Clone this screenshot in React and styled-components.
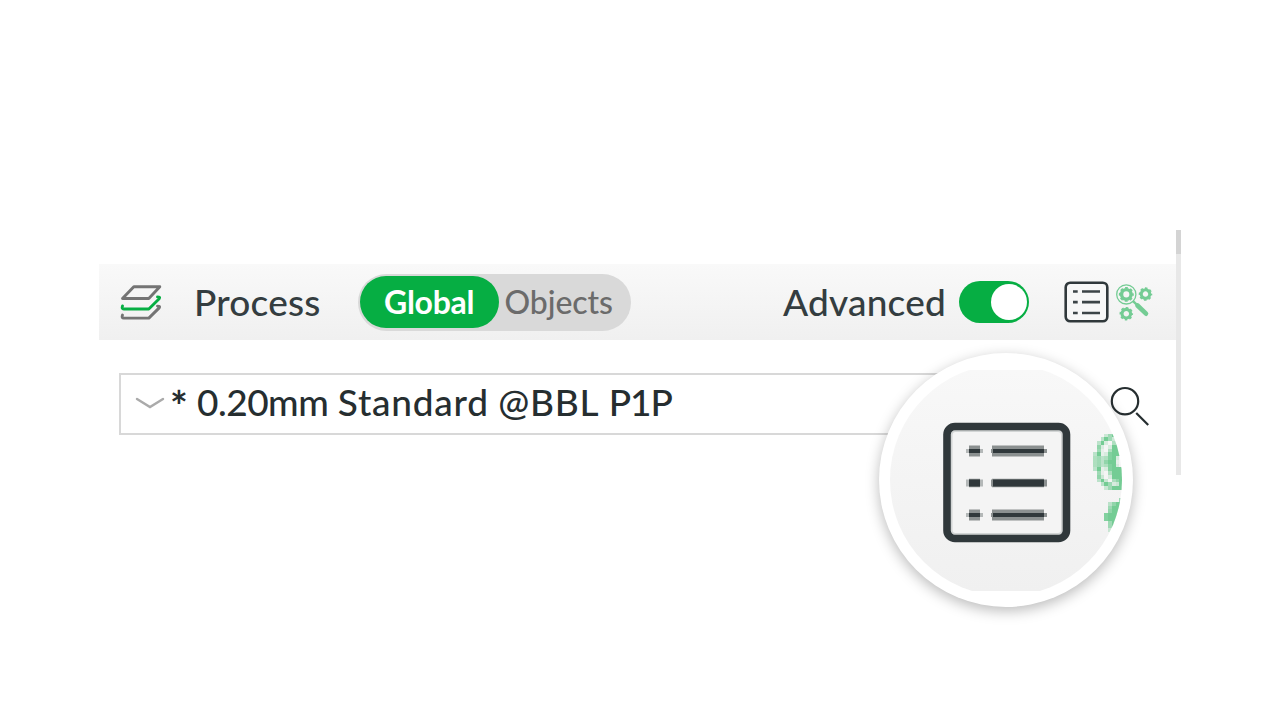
import React from 'react';
import styled, { createGlobalStyle } from 'styled-components';

const GlobalStyle = createGlobalStyle`
  * { box-sizing: border-box; }
  body { margin: 0; background: #fff; overflow: hidden; font-family: Lato, "Noto Sans", sans-serif; }
  svg { display: block; flex: none; }
`;

const Page = styled.main`
  position: relative;
  display: flex;
  width: 1280px;
  height: 720px;
  padding: 230px 0 0 99px;
  background: #fff;
`;

const Panel = styled.section`
  display: flex;
  flex-direction: column;
  width: 1076.5px;
  height: 244px;
  padding-top: 34px;
`;

const Toolbar = styled.header`
  display: flex;
  align-items: center;
  height: 75.5px;
  padding: 1px 22.5px 0 20px;
  background: linear-gradient(#f9f9f9, #f0f0f0);
`;

const Label = styled.span`
  padding-bottom: 1px;
  font-size: 37px;
  font-weight: 500;
  line-height: 44px;
  white-space: pre;
  letter-spacing: 0.22px;
  color: #343d40;
`;

const Title = styled(Label)`
  margin-left: 31px;
`;

const Segmented = styled.div`
  display: flex;
  align-items: center;
  width: 273px;
  height: 57px;
  margin-left: 37px;
  padding: 0 0 0 2px;
  border-radius: 29px;
  background: #d9d9d9;
`;

const Segment = styled.button`
  width: ${p => p.$width}px;
  height: 52px;
  padding: 0;
  border: 0;
  border-radius: 26px;
  background: ${p => (p.$active ? '#06ae43' : 'transparent')};
  color: ${p => (p.$active ? '#fff' : '#6b6b6b')};
  font: ${p => (p.$active ? 700 : 500)} 32px/50px Lato, sans-serif;
  letter-spacing: ${p => (p.$active ? -0.3 : -0.1)}px;
`;

const Spacer = styled.div`
  flex: 1;
`;

const Switch = styled.div`
  display: flex;
  align-items: center;
  justify-content: flex-end;
  width: 70.5px;
  height: 42px;
  margin: 0 34.5px 0 12.5px;
  padding-right: 2.5px;
  border-radius: 21px;
  background: #06ae43;
`;

const Knob = styled.div`
  width: 36px;
  height: 36px;
  border-radius: 50%;
  background: #fff;
`;

const Actions = styled.div`
  display: flex;
  align-items: center;
  gap: 6.5px;
`;

const PresetRow = styled.div`
  display: flex;
  align-items: center;
  justify-content: space-between;
  margin-top: 33.5px;
  padding: 0 26.5px 0 19.5px;
`;

const Preset = styled.div`
  display: flex;
  align-items: center;
  width: 850px;
  height: 62px;
  padding-left: 14.5px;
  border: 2px solid #d8d8d8;
  background: #fff;
`;

const Modified = styled.span`
  width: 19px;
  margin-left: 5px;
  padding-top: 3px;
  font-size: 42px;
  font-weight: 700;
  line-height: 44px;
  color: #262e30;
`;

const PresetName = styled(Label)`
  margin-left: 8px;
  padding-bottom: 4px;
  color: #262e30;
`;

const Word = styled.span`
  letter-spacing: ${p => p.$track}px;
`;

const Scrollbar = styled.div`
  width: 5.5px;
  height: 244.5px;
  background: #e8e8e8;
`;

const Thumb = styled.div`
  height: 23.5px;
  background: #d4d4d4;
`;

const Lens = styled.div`
  position: absolute;
  left: 879px;
  top: 353px;
  width: 254px;
  height: 254px;
  padding: 11px;
  border-radius: 50%;
  background: #fff;
  box-shadow: 0 4px 14px rgba(0, 0, 0, 0.27);
`;

function LayersIcon() {
  return (
    <svg width="44" height="38" viewBox="0 0 44 38" fill="none" strokeWidth="2.9" strokeLinejoin="round" strokeLinecap="round">
      <path d="M14.8 3.7H40.8L29.8 15.5H3.5Z" stroke="#747474" />
      <path d="M3.5 22.9Q2.4 26 4.8 26H29.8L40.2 15.7Q41.6 13.9 38.5 13.9" stroke="#06ae43" />
      <path d="M3.5 32.1Q2.4 35.1 4.8 35.1H29.8L40.2 24.9Q41.6 23.1 38.5 23.1" stroke="#747474" />
    </svg>
  );
}

function ListIcon() {
  return (
    <svg width="45" height="42" viewBox="0 0 45 42" fill="none">
      <rect x="1.7" y="1.7" width="41.6" height="38.6" rx="4.5" fill="#f7f7f7" stroke="#30383b" strokeWidth="2.6" />
      {[10.5, 21.2, 32].map(y => (
        <path key={y} d={`M9 ${y}H13.7M18 ${y}H36`} stroke="#3c4447" strokeWidth="2.7" />
      ))}
    </svg>
  );
}

function Gear({ x, y, r }) {
  return (
    <g transform={`translate(${x} ${y})`} stroke="#74cc94">
      <circle r={r * 0.64} strokeWidth={r * 0.46} />
      <circle r={r * 0.89} strokeWidth={r * 0.24} strokeDasharray={`${r * 0.38} ${r * 0.319}`} strokeDashoffset={r * 0.19} />
    </g>
  );
}

function TuneIcon() {
  return (
    <svg width="38" height="38" viewBox="0 0 38 38" fill="none">
      <circle cx="11.3" cy="11.4" r="9.6" stroke="#74cc94" strokeWidth="1.3" />
      <Gear x={11.3} y={11.4} r={7.4} />
      <Gear x={30.5} y={11.1} r={6.7} />
      <Gear x={11.3} y={30.7} r={6.7} />
      <path d="M18 18.2 22 21.9" stroke="#74cc94" strokeWidth="2.4" />
      <path d="M22.5 22.5 31 30.7" stroke="#74cc94" strokeWidth="4.6" strokeLinecap="round" />
    </svg>
  );
}

// Opacity of each enlarged pixel, from 0 (clear) to 9 (solid).
const largeGear = [
  '00036999',
  '00496311',
  '04920577',
  '07202999',
  '06105999',
  '49128999',
  '56458920',
  '56479910',
  '56458920',
  '49128999',
  '06105999',
  '07302999',
  '04930579',
  '00496239',
  '00036999',
];
const smallGear = ['00000006', '00004799', '00006999', '00007999', '00089999', '00089999', '00006999', '00006999', '00003799'];

function Pixels({ x, y, rows }) {
  const size = 3.75;
  return rows.flatMap((row, j) =>
    [...row].map((v, i) =>
      v === '0' ? null : (
        <rect
          key={`${i}-${j}`}
          x={x + i * size}
          y={y + j * size}
          width={size}
          height={size}
          fill="#74cc94"
          fillOpacity={v / 9}
          shapeRendering="crispEdges"
        />
      )
    )
  );
}

function Magnified() {
  return (
    <svg width="232" height="232" viewBox="890 364 232 232">
      <defs>
        <clipPath id="lens"><circle cx="1006" cy="480" r="116" /></clipPath>
        <linearGradient id="bar" x1="0" y1="0" x2="0" y2="1">
          <stop offset="0" stopColor="#f8f8f8" /><stop offset="1" stopColor="#f0f0f0" />
        </linearGradient>
      </defs>
      <g clipPath="url(#lens)">
        <rect x="890" y="370" width="232" height="221" fill="url(#bar)" />
        <rect x="951.5" y="431" width="110.5" height="103" rx="4" fill="#f4f4f4" stroke="#d2d5d5" strokeWidth="2" />
        <rect x="947" y="426.5" width="119.5" height="112" rx="8" fill="none" stroke="#30383b" strokeWidth="7.6" />
        {[451, 483, 515].map(y => {
          const core = y === 483 ? 7 : 4;
          const edge = y === 483 ? 8.5 : 11;
          return (
            <g key={y}>
              <rect x="966" y={y - core / 2} width="17" height={core} fill="#b4b8b8" />
              <rect x="969" y={y - edge / 2} width="11" height={edge} fill="#8b9090" />
              <rect x="969" y={y - core / 2} width="11" height={core} fill="#30383b" />
              <rect x="991" y={y - core / 2} width="56" height={core} fill="#8b9090" />
              <rect x="992" y={y - edge / 2} width="52" height={edge} fill="#8b9090" />
              <rect x="993" y={y - core / 2} width="51" height={core} fill="#30383b" />
            </g>
          );
        })}
        <Pixels x={1093} y={433.5} rows={largeGear} />
        <Pixels x={1093} y={498} rows={smallGear} />
      </g>
    </svg>
  );
}

export default function App() {
  return (
    <Page>
      <GlobalStyle />
      <Panel>
        <Toolbar>
          <LayersIcon />
          <Title>Process</Title>
          <Segmented>
            <Segment $active $width={139}>Global</Segment>
            <Segment $width={120}>Objects</Segment>
          </Segmented>
          <Spacer />
          <Label>Advanced</Label>
          <Switch><Knob /></Switch>
          <Actions>
            <ListIcon />
            <TuneIcon />
          </Actions>
        </Toolbar>
        <PresetRow>
          <Preset>
            <svg width="30" height="20" viewBox="0 0 30 20" fill="none" strokeLinecap="round"><path d="M2 5 15 13 28 5" stroke="#aaa" strokeWidth="2.4" /></svg>
            <Modified>*</Modified>
            <PresetName>
              <Word $track={-0.5}>0.20mm</Word>{' '}
              <Word $track={0.75}>Standard</Word>{' '}
              <Word $track={0.7}>@BBL</Word>{' '}
              <Word $track={-1.1}>P1P</Word>
            </PresetName>
          </Preset>
          <svg width="40" height="44" viewBox="0 0 40 44" fill="none" stroke="#262e30" strokeWidth="2.2">
            <circle cx="16" cy="19.2" r="13.2" /><path d="M27.2 31 39.2 43" />
          </svg>
        </PresetRow>
      </Panel>
      <Scrollbar><Thumb /></Scrollbar>
      <Lens><Magnified /></Lens>
    </Page>
  );
}
